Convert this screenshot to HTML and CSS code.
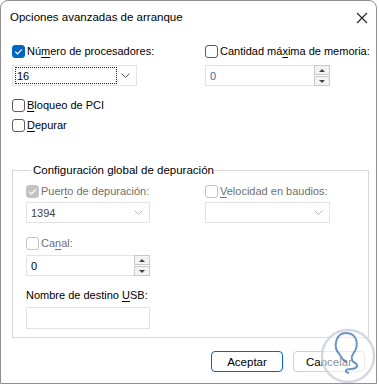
FILE: index.html
```html
<!DOCTYPE html>
<html lang="es">
<head>
  <meta charset="utf-8" />
  <title>Opciones avanzadas de arranque</title>
  <link rel="stylesheet" href="styles.css">
</head>
<body>
  <div class="dialog">
    <div class="titlebar">
      <span class="title">Opciones avanzadas de arranque</span>
      <svg class="close" width="12" height="12" viewBox="0 0 12 12">
        <path d="M1 1 L11 11 M11 1 L1 11" stroke="#222" stroke-width="1.1" fill="none" />
      </svg>
    </div>

    <div class="content">
      <div class="cols">
        <div class="col">
          <label class="check">
            <span class="box checked"><svg viewBox="0 0 13 13"><path d="M3.3 6.8 L5.6 9 L9.8 4.3" stroke="#fff" stroke-width="1.2" fill="none" /></svg></span>
            <span>Nú<u>m</u>ero de procesadores:</span>
          </label>
          <div class="select focus">
            <span class="value">16</span>
            <svg class="chev" width="9" height="5" viewBox="0 0 9 5"><path d="M0.5 0.5 L4.5 4.5 L8.5 0.5" stroke="#555" fill="none" /></svg>
          </div>
          <label class="check gap-top">
            <span class="box"></span>
            <span><u>B</u>loqueo de PCI</span>
          </label>
          <label class="check tight">
            <span class="box"></span>
            <span><u>D</u>epurar</span>
          </label>
        </div>
        <div class="col">
          <label class="check">
            <span class="box"></span>
            <span>Cantidad má<u>x</u>ima de memoria:</span>
          </label>
          <div class="spin">
            <span class="value num">0</span>
            <span class="arrows">
              <span class="arrow up"></span>
              <span class="arrow down"></span>
            </span>
          </div>
        </div>
      </div>

      <fieldset class="group">
        <legend>Configuración global de depuración</legend>
        <div class="cols inner">
          <div class="col">
            <label class="check disabled">
              <span class="box checked off"><svg viewBox="0 0 13 13"><path d="M3.3 6.8 L5.6 9 L9.8 4.3" stroke="#fff" stroke-width="1.2" fill="none" /></svg></span>
              <span>Puer<u>t</u>o de depuración:</span>
            </label>
            <div class="select off">
              <span class="value">1394</span>
              <svg class="chev" width="9" height="5" viewBox="0 0 9 5"><path d="M0.5 0.5 L4.5 4.5 L8.5 0.5" stroke="#bbb" fill="none" /></svg>
            </div>
            <label class="check disabled canal">
              <span class="box off"></span>
              <span>Ca<u>n</u>al:</span>
            </label>
            <div class="spin">
              <span class="value">0</span>
              <span class="arrows">
                <span class="arrow up"></span>
                <span class="arrow down"></span>
              </span>
            </div>
            <div class="label-usb">Nombre de destino <u>U</u>SB:</div>
            <div class="textbox"></div>
          </div>
          <div class="col">
            <label class="check disabled">
              <span class="box off"></span>
              <span><u>V</u>elocidad en baudios:</span>
            </label>
            <div class="select off">
              <span class="value"></span>
              <svg class="chev" width="9" height="5" viewBox="0 0 9 5"><path d="M0.5 0.5 L4.5 4.5 L8.5 0.5" stroke="#bbb" fill="none" /></svg>
            </div>
          </div>
        </div>
      </fieldset>

      <div class="buttons">
        <button class="btn primary">Aceptar</button>
        <button class="btn">Cancelar</button>
      </div>
    </div>

    <svg class="mark" width="60" height="60" viewBox="0 0 60 60">
      <circle cx="30" cy="31" r="26" fill="rgba(255,255,255,0.55)" stroke="rgba(205,210,220,0.85)" stroke-width="2.5" />
      <path d="M22 30 C14 22 18 8 28 8 C39 8 42 20 35 29 C33 32 33 36 37 38 C41 40 39 44 33 44 C27 44 26 47 31 48" stroke="rgba(70,120,185,0.8)" stroke-width="2" fill="none" />
      <path d="M22 30 C24 34 26 36 29 37" stroke="rgba(70,120,185,0.8)" stroke-width="2" fill="none" />
    </svg>
  </div>
</body>
</html>
```

FILE: styles.css
```css
body {
  margin: 0;
  background: #fff;
  font-family: "Liberation Sans", Arial, sans-serif;
  font-size: 11px;
  color: #000;
}
u {
  text-decoration-thickness: 1px;
  text-underline-offset: 2px;
}
.dialog {
  position: relative;
  width: 377px;
  height: 384px;
  box-sizing: border-box;
  border: 1px solid #8f8f8f;
  border-radius: 8px 8px 0 0;
  background: #fff;
  overflow: hidden;
}
.titlebar {
  height: 31px;
  display: flex;
  align-items: center;
  justify-content: space-between;
  padding: 0 8px 0 9px;
}
.title {
  font-size: 11.5px;
}
.close {
  margin-top: 2px;
}
.content {
  padding: 12px 0 0 11px;
}
.cols {
  display: grid;
  grid-template-columns: 193px 125px;
}
.check {
  display: flex;
  align-items: center;
  gap: 2px;
  height: 14px;
  line-height: 14px;
  white-space: nowrap;
}
.box {
  width: 13px;
  height: 13px;
  box-sizing: border-box;
  border: 1px solid #5c5c5c;
  border-radius: 3px;
  display: flex;
  flex: none;
}
.box svg {
  width: 13px;
  height: 13px;
  margin: -1px;
}
.box.checked {
  background: #0067c0;
  border-color: #0067c0;
}
.box.off {
  border-color: #c4c4c4;
}
.box.checked.off {
  background: #c4c4c4;
}
.disabled {
  color: #6f6f6f;
}
.select, .spin, .textbox {
  margin-top: 7px;
  width: 125px;
  height: 21px;
  box-sizing: border-box;
  border: 1px solid #e3e3e3;
  display: flex;
  align-items: center;
  justify-content: space-between;
}
.select .value, .spin .value {
  padding-left: 4px;
}
.select.focus .value {
  flex: 1;
  padding: 0 0 0 1px;
  margin-left: 2px;
  height: 17px;
  border: 1px dotted #222;
  box-sizing: border-box;
  margin-right: 4px;
  display: flex;
  align-items: center;
}
.chev {
  margin-right: 6px;
}
.select.off .value {
  color: #444;
}
.spin .value.num {
  color: #3d6aa8;
}
.arrows {
  display: flex;
  flex-direction: column;
  height: 21px;
  margin-right: -1px;
}
.arrow {
  width: 16px;
  height: 10px;
  box-sizing: border-box;
  border: 1px solid #c9c9c9;
  background: #f3f3f3;
  display: flex;
  align-items: center;
  justify-content: center;
}
.arrow.down {
  margin-top: 1px;
}
.arrow::after {
  content: "";
  border-left: 3px solid transparent;
  border-right: 3px solid transparent;
}
.arrow.up::after {
  border-bottom: 3px solid #444;
}
.arrow.down::after {
  border-top: 3px solid #444;
}
.gap-top {
  margin-top: 12px;
}
.tight {
  margin-top: 6px;
}
.group {
  margin: 31px 0 0 0;
  width: 357px;
  box-sizing: border-box;
  border: 1px solid #d8d8d8;
  padding: 7px 0 8px 13px;
}
.group legend {
  padding: 0 1px 0 2px;
  margin-left: 5px;
  line-height: 14px;
  font-size: 11.5px;
}
.inner {
  grid-template-columns: 179px 125px;
}
.inner .select {
  margin-top: 4px;
}
.inner .select, .inner .spin, .inner .textbox {
  width: 124px;
}
.inner .col:last-child .select {
  width: 125px;
}
.canal {
  margin-top: 13px;
}
.inner .spin {
  margin-top: 5px;
}
.label-usb {
  margin-top: 12px;
  line-height: 14px;
}
.textbox {
  margin-top: 5px;
  height: 22px;
}
.buttons {
  display: flex;
  justify-content: flex-end;
  gap: 10px;
  padding: 13px 11px 0 0;
}
.btn {
  width: 72px;
  height: 21px;
  font-family: inherit;
  font-size: 11.5px;
  color: #000;
  background: #fff;
  border: 1px solid #d0d0d0;
  border-radius: 4px;
  padding: 0;
}
.btn.primary {
  border-color: #0067c0;
}
.mark {
  position: absolute;
  left: 317px;
  top: 324px;
}
```
